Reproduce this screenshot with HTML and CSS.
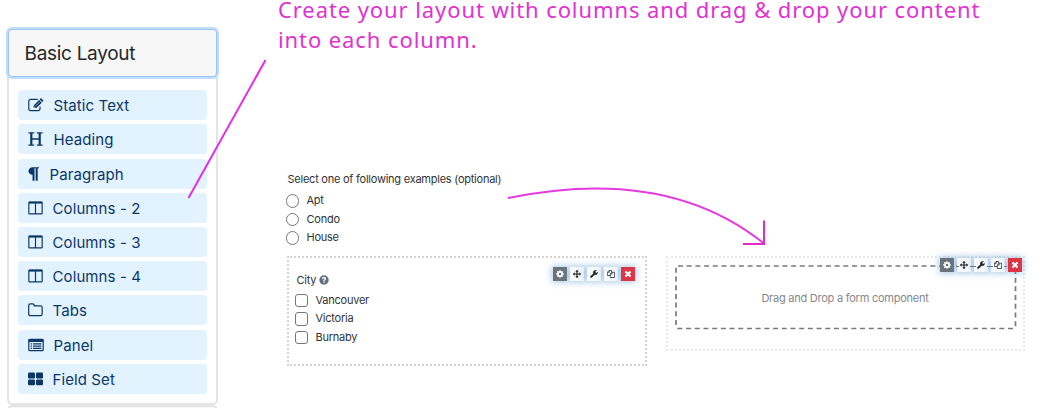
FILE: index.html
```html
<!DOCTYPE html>
<html lang="en">
<head>
<meta charset="utf-8">
<title>Form builder layout</title>
<link rel="stylesheet" href="styles.css">
</head>
<body>
<svg class="defs" aria-hidden="true">
  <symbol id="gear" viewBox="0 0 16 16"><circle cx="8" cy="8" r="4.3" fill="none" stroke="currentColor" stroke-width="3.6"/><path d="M8 0.5v3M8 12.5v3M.5 8h3M12.5 8h3M2.7 2.7l2 2M11.3 11.3l2 2M2.7 13.3l2-2M11.3 4.7l2-2" stroke="currentColor" stroke-width="2.6"/></symbol>
  <symbol id="move" viewBox="0 0 16 16"><path d="M8-.5l3.4 3.9H9.2v3.400h3.400V4.600L16.500 8l-3.900 3.400V9.200H9.200v3.400h2.200L8 16.500l-3.400-3.900h2.200V9.200H3.400v2.200L-.5 8l3.900-3.400v2.200h3.400V3.400H4.600z" fill="currentColor"/></symbol>
  <symbol id="wrench" viewBox="0 0 16 16"><path d="M15.4 4.4a4.7 4.7 0 0 1-6.2 4.9L3.5 15a1.8 1.8 0 0 1-2.5-2.5l5.8-5.7A4.7 4.7 0 0 1 13.4 1L10.6 2.7v2.2l1.8 1z" fill="currentColor" stroke="currentColor" stroke-width=".6"/></symbol>
  <symbol id="copy" viewBox="0 0 16 16"><path d="M6 11H.8V4.5L4.3 1H9v3M4.5 1v3.7H1M6.5 8l3.7-3.5h5V15H6.5zM10.3 4.5V8H6.5" fill="none" stroke="currentColor" stroke-width="1.5"/></symbol>
  <symbol id="close" viewBox="0 0 16 16"><path d="M3 3l10 10M13 3L3 13" stroke="currentColor" stroke-width="4.4"/></symbol>
  <symbol id="columns" viewBox="0 0 16 14"><path d="M1.6.8h12.8q.7 0 .7.7v11q0 .7-.7.7H1.6q-.7 0-.7-.7v-11q0-.7.7-.7zM8 2v11" fill="none" stroke="currentColor" stroke-width="1.25"/><path d="M1 .3h14v2H1z" fill="currentColor"/></symbol>
</svg>
<div class="page">
  <aside class="sidebar">
    <section class="card">
      <h2 class="card-title"><span>Basic Layout</span></h2>
      <div class="items">
        <div class="item"><svg width="16" height="14" viewBox="0 0 16.500 14"><path d="M10 1.2H3Q.8 1.2.8 3.4v7.2q0 2.2 2.2 2.2h7.2q2.2 0 2.2-2.2V8.6" fill="none" stroke="currentColor" stroke-width="1.2"/><path d="M5.8 10.2V7.4L11.4 1.8l2.8 2.8-5.6 5.6zM12 1.2l.9-.9q.5-.4 1 0l1.7 1.7q.5.5 0 1l-.9 1z" fill="currentColor"/><path d="M7.7 8.2l4.4-4.4M6.5 8.3v1.2h1.2" fill="none" stroke="#e2f2ff" stroke-width=".6"/></svg><span>Static Text</span></div>
        <div class="item"><svg width="16" height="14" viewBox="0 0 16 14"><path d="M.4.8h5.800M8.800.8h5.800M.4 13.200h5.800M8.800 13.200h5.800M4 7h7" stroke="currentColor" stroke-width="1.3"/><path d="M3.300 1v12M11.700 1v12" stroke="currentColor" stroke-width="2.200"/></svg><span>Heading</span></div>
        <div class="item raised"><svg width="12" height="14" viewBox="0 0 12.500 14"><path d="M11.5 0v1.1h-1.4V14H8V1.1H6.8V14H4.7V7.9C2 7.8.5 6.1.5 4S2.2 0 5 0z" fill="currentColor"/></svg><span>Paragraph</span></div>
        <div class="item"><svg width="15" height="14"><use href="#columns"/></svg><span>Columns - 2</span></div>
        <div class="item"><svg width="15" height="14"><use href="#columns"/></svg><span>Columns - 3</span></div>
        <div class="item"><svg width="15" height="14"><use href="#columns"/></svg><span>Columns - 4</span></div>
        <div class="item"><svg width="15" height="14" viewBox="0 0 15 14"><path d="M.7 11V2.600Q.7.9 2.400.9h2.200q1.700 0 1.700 2h6.100q1.800 0 1.800 1.700V11q0 1.700-1.800 1.700h-10Q.7 12.700.7 11z" fill="none" stroke="currentColor" stroke-width="1.2"/></svg><span>Tabs</span></div>
        <div class="item raised"><svg width="16" height="14" viewBox="0 0 16 14"><path d="M1.800 1.400h12.400q1 0 1 1v9.300q0 1-1 1H1.800q-1 0-1-1V2.400q0-1 1-1z" fill="none" stroke="currentColor" stroke-width="1.2"/><path d="M.8 1h14.400v3H.8zM2.600 5.300h1.300v1.200H2.600zM2.600 7.500h1.300v1.200H2.600zM2.600 9.700h1.300v1.200H2.600zM4.900 5.300h8.500v1.200H4.900zM4.900 7.500h8.500v1.200H4.900zM4.900 9.700h8.500v1.200H4.900z" fill="currentColor"/></svg><span>Panel</span></div>
        <div class="item"><svg width="15" height="14" viewBox="0 0 15 14"><g fill="currentColor"><rect y=".6" width="7" height="5.900" rx="1.200"/><rect x="8" y=".6" width="7" height="5.900" rx="1.200"/><rect y="7.400" width="7" height="5.900" rx="1.200"/><rect x="8" y="7.400" width="7" height="5.900" rx="1.200"/></g></svg><span>Field Set</span></div>
      </div>
    </section>
    <section class="card next"></section>
  </aside>
  <main class="main">
    <p class="note">Create your layout with columns and drag &amp; drop your content<br>into each column.</p>
    <div class="question"><span>Select one of following examples (optional)</span></div>
    <div class="options radios">
      <div class="option"><i class="radio"></i><span>Apt</span></div>
      <div class="option"><i class="radio"></i><span>Condo</span></div>
      <div class="option"><i class="radio"></i><span>House</span></div>
    </div>
    <div class="columns">
      <div class="column filled">
        <div class="city"><span>City</span><svg width="10" height="10" viewBox="0 0 10 10"><circle cx="5" cy="5" r="4.700" fill="#63707c"/><path d="M3.500 3.900Q3.600 2.500 5 2.500t1.500 1.300Q6.500 4.700 5 5.400v.5" fill="none" stroke="#fff" stroke-width="1.300"/><rect x="4.300" y="6.600" width="1.400" height="1.300" fill="#fff"/></svg></div>
        <div class="options">
          <div class="option"><i class="check"></i><span>Vancouver</span></div>
          <div class="option"><i class="check"></i><span>Victoria</span></div>
          <div class="option"><i class="check"></i><span>Burnaby</span></div>
        </div>
        <div class="tools">
          <b class="tool dark"><svg><use href="#gear"/></svg></b><b class="tool"><svg><use href="#move"/></svg></b><b class="tool"><svg><use href="#wrench"/></svg></b><b class="tool"><svg><use href="#copy"/></svg></b><b class="tool red"><svg><use href="#close"/></svg></b>
        </div>
      </div>
      <div class="column empty">
        <div class="drop"><svg class="outline" width="342" height="65"><rect x="1" y="1" width="339.500" height="62.500" rx="2" /></svg><span>Drag and Drop a form component</span></div>
        <div class="tools clear">
          <b class="tool dark"><svg><use href="#gear"/></svg></b><b class="tool through"><svg><use href="#move"/></svg></b><b class="tool through"><svg><use href="#wrench"/></svg></b><b class="tool through"><svg><use href="#copy"/></svg></b><b class="tool red"><svg><use href="#close"/></svg></b>
        </div>
      </div>
    </div>
  </main>
  <svg class="arrows" width="1044" height="408" viewBox="0 0 1044 408"><path d="M265.500 60L188.500 198" stroke="#e32de8"/><path d="M508 198Q667 165.500 764 243.500" stroke="#e43ae0"/><path d="M743 244h21v-23.500" stroke="#dd2cc8"/></svg>
</div>
</body>
</html>
```
FILE: styles.css
```css
* { box-sizing: border-box; }
body { margin: 0; background: #fff; font-family: Inter, "Liberation Sans", sans-serif; }
.defs { position: absolute; width: 0; height: 0; }
.page { position: relative; display: flex; width: 1044px; height: 408px; overflow: hidden; }
.sidebar { width: 218px; padding: 28px 0 0 7px; flex: none; }
.card { width: 211px; height: 377px; border: 2px solid #e4e4e4; border-radius: 5px; }
.card.next { height: 30px; background: #f7f7f7; }
.card-title { margin: -1px -1px 0; height: 48px; padding: 0 0 0 15.500px; display: flex; align-items: center; border: 1px solid #9ec5ef; border-radius: 4px; box-shadow: 0 0 0 2px #bfdcfb; background: #f7f7f7; color: #25282b; font-size: 19px; font-weight: 400; letter-spacing: -.3px; }
.items { padding: 13px 9px; display: flex; flex-direction: column; gap: 4px; }
.item { height: 30px; width: 188.500px; background: #e2f2ff; border-radius: 4px; display: flex; align-items: center; padding-left: 10px; color: #0a3768; font-size: 15px; letter-spacing: .1px; white-space: nowrap; }
.item svg { flex: none; margin-right: 9.500px; }
.item.raised { margin-top: 1px; }
.main { flex: 1; padding-left: 60px; color: #303336; font-size: 11px; letter-spacing: -.24px; }
.note { margin: -6px 0 0; height: 177px; color: #e232cd; font: 22px/30px "Noto Sans", sans-serif; letter-spacing: .91px; white-space: nowrap; }
.question { height: 16px; margin-left: 9.500px; line-height: 17px; }
.options { display: flex; flex-direction: column; }
.radios { margin: 4.500px 0 0 7.500px; height: 64.500px; }
.option { height: 18.500px; display: flex; align-items: center; gap: 7.500px; line-height: 17px; }
.radio, .check { width: 13.500px; height: 13.500px; border: 1px solid #74777a; background: #fff; }
.radio { border-radius: 50%; }
.check { border-radius: 3px; }
.columns { display: flex; align-items: flex-start; gap: 19px; margin-left: 9px; }
.column { position: relative; width: 360px; border: 2px dotted #d3d3d3; }
.filled { height: 110px; padding: 13px 0 0 5.500px; }
.city { display: flex; align-items: center; gap: 2.500px; height: 17px; padding-left: 2px; }
.filled .options { margin-top: 3px; }
.empty { width: 359px; height: 95px; padding: 7px; border-color: #e8e8e8; }
.drop { position: relative; width: 342px; height: 65px; padding-right: 2px; display: flex; align-items: center; justify-content: center; color: #86888a; }
.outline { position: absolute; inset: 0; }
.outline rect { fill: none; stroke: #77797b; stroke-width: 1.700; stroke-dasharray: 5 3.700; }
.tools { position: absolute; top: 9px; right: 10px; display: flex; gap: 3px; }
.tools.clear { top: 0; right: 1px; }
.tool { position: relative; width: 14px; height: 14px; display: flex; align-items: center; justify-content: center; background: #f5f9fc; color: #202427; box-shadow: 0 0 7px 1px rgba(91,151,209,.55); }
.tool svg { width: 8px; height: 8px; overflow: visible; }
.tool.dark { background: #6b737b; color: #fff; }
.tool.red { background: #dc3545; color: #fff; }
.through::before, .through::after { content: ""; position: absolute; top: 7.500px; width: 3px; height: 1.500px; background: #77797b; }
.through::before { left: -1px; }
.through::after { right: -2px; }
.arrows { position: absolute; inset: 0; pointer-events: none; }
.arrows path { fill: none; stroke-width: 2; }
```
